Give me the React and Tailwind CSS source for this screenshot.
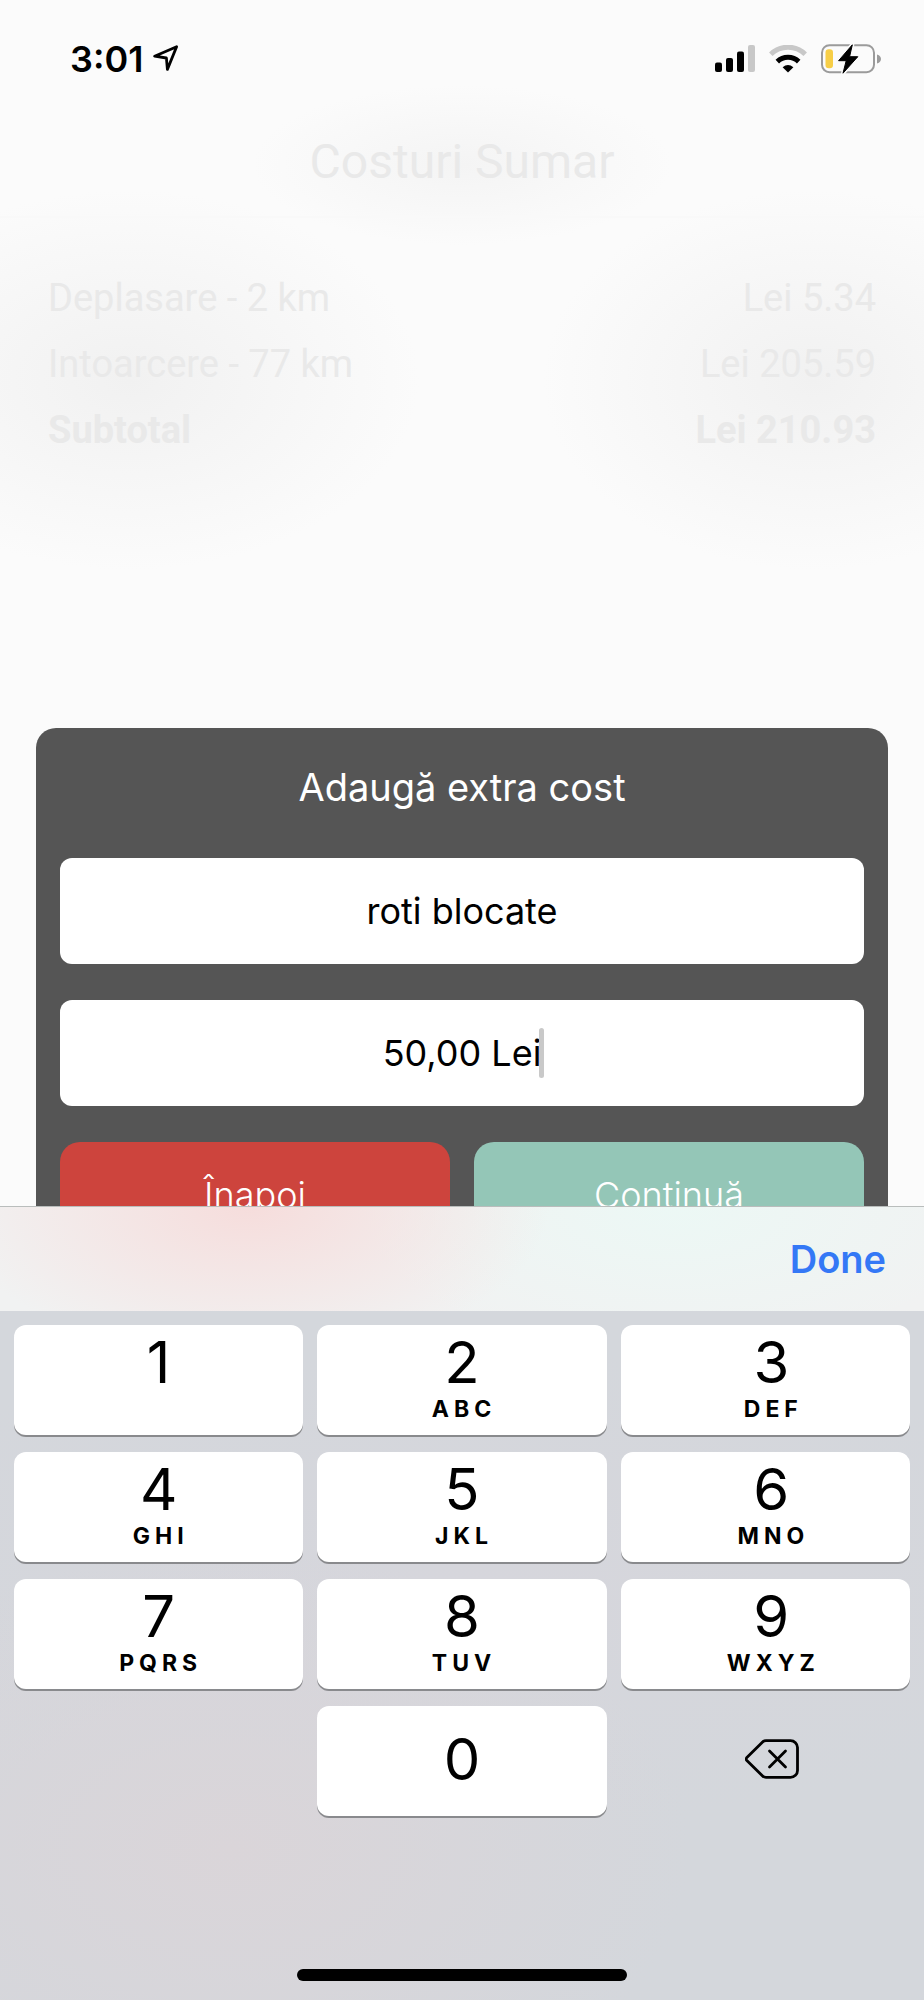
import { useState } from 'react'

const COSTS = [
  { label: 'Deplasare - 2 km', amount: 'Lei 5.34' },
  { label: 'Intoarcere - 77 km', amount: 'Lei 205.59' },
]

const KEYS = [
  { digit: '1', letters: '' },
  { digit: '2', letters: 'ABC' },
  { digit: '3', letters: 'DEF', last: true },
  { digit: '4', letters: 'GHI' },
  { digit: '5', letters: 'JKL' },
  { digit: '6', letters: 'MNO', last: true },
  { digit: '7', letters: 'PQRS' },
  { digit: '8', letters: 'TUV' },
  { digit: '9', letters: 'WXYZ', last: true },
]

function LocationIcon() {
  return (
    <svg width="26" height="28" viewBox="0 0 26 28" fill="none" stroke="#000" strokeWidth="2.8" strokeLinejoin="round">
      <path d="M1.6 11.2 23.6 1.8 14.4 24.4 13.4 13Z" />
    </svg>
  )
}

function SignalIcon() {
  return (
    <svg width="40" height="28" viewBox="0 0 40 28">
      <rect x="0" y="17.5" width="7" height="9.5" rx="2" />
      <rect x="11" y="13" width="7" height="14" rx="2" />
      <rect x="22" y="6.5" width="7" height="20.5" rx="2" />
      <rect x="33" y="0" width="7" height="27" rx="2" fill="#c8c8c8" />
    </svg>
  )
}

function WifiIcon() {
  return (
    <svg width="38" height="28" viewBox="0 0 38 28" fill="none" strokeWidth="5">
      <path d="M1.8 9.2a24.6 24.6 0 0 1 34.4 0" stroke="#c8c8c8" />
      <path d="M8.300 16.600a15.300 15.300 0 0 1 21.400 0" stroke="#000" />
      <path d="M13.600 22.200q5.400-4.400 10.800 0L19 27.600Z" fill="#000" />
    </svg>
  )
}

function BatteryIcon() {
  return (
    <svg width="60" height="30" viewBox="0 0 60 30">
      <rect x="1" y="1.2" width="52" height="27" rx="7.5" fill="none" stroke="#9b9b9b" strokeWidth="2" />
      <path d="M56 10.5c3 1 4 2.6 4 4.5s-1 3.5-4 4.5Z" fill="#9b9b9b" />
      <rect x="4.5" y="5.3" width="7.5" height="19" rx="3.2" fill="#f7ce46" />
      <path
        d="M31.3.8 17.6 16.7h7.6L22 29.2 36.8 12.7h-8.2Z"
        stroke="#fafafa"
        strokeWidth="4"
        strokeLinejoin="round"
      />
      <path d="M31.3.8 17.6 16.7h7.6L22 29.2 36.8 12.7h-8.2Z" stroke="#000" strokeLinejoin="round" />
    </svg>
  )
}

function DeleteIcon() {
  return (
    <svg width="54" height="40" viewBox="0 0 54 40" fill="none" stroke="#000" strokeWidth="2.8" strokeLinecap="round" strokeLinejoin="round">
      <path d="M21 1.6H45.5a7 7 0 0 1 7 7v22.8a7 7 0 0 1-7 7H21q-2 0-3.4-1.4L1.6 21.2q-1-1.2 0-2.4L17.6 3q1.4-1.4 3.4-1.4Z" />
      <path d="m24.5 12 16 16m0-16-16 16" />
    </svg>
  )
}

function StatusBar() {
  return (
    <div className="flex h-[118px] items-center justify-between pl-[70px] pr-[43px]">
      <div className="flex items-center gap-2.5">
        <span className="text-[36px] leading-10 font-semibold">3:01</span>
        <LocationIcon />
      </div>
      <div className="flex items-center gap-3.5">
        <SignalIcon />
        <WifiIcon />
        <BatteryIcon />
      </div>
    </div>
  )
}

function Keypad() {
  return (
    <div className="grid grid-cols-3 gap-x-3.5 gap-y-[17px] px-3.5 pt-3.5 text-black">
      {KEYS.map(({ digit, letters, last }) => (
        <button
          key={digit}
          className={`flex h-[110px] flex-col items-center rounded-xl bg-white pt-[7px] shadow-[0_2px_0_#898a8d] ${last ? 'pl-3' : ''}`}
        >
          <span className="text-[58px] leading-[60px]">{digit}</span>
          {letters && <span className="pl-1 text-[23px] leading-[34px] font-bold tracking-[5px]">{letters}</span>}
        </button>
      ))}
      <button className="col-start-2 flex h-[110px] items-center justify-center rounded-xl bg-white pb-1 shadow-[0_2px_0_#898a8d]">
        <span className="text-[58px] leading-[60px]">0</span>
      </button>
      <button aria-label="Delete" className="flex h-[110px] items-center justify-center pb-1 pl-3.5">
        <DeleteIcon />
      </button>
    </div>
  )
}

export default function App() {
  const [name, setName] = useState('roti blocate')
  const [price, setPrice] = useState('50,00 Lei')

  return (
    <div className="min-h-screen bg-[#fbfbfb] bg-[radial-gradient(210px_80px_at_50%_165px,#f4f4f4,transparent),radial-gradient(290px_190px_at_14%_380px,#f1f1f1,transparent),radial-gradient(270px_190px_at_88%_380px,#f1f1f1,transparent)] bg-no-repeat font-['Inter',sans-serif] text-black">
      <StatusBar />

      <main>
        <section className="font-['Roboto',sans-serif] text-[#e9e9e9]">
          <h1 className="border-b-2 border-[#f9f9f9] pt-3.5 pb-6 text-center text-[48px] leading-15">Costuri Sumar</h1>
          <dl className="px-12 pt-[47px] text-[38px] leading-[66px]">
            {COSTS.map((cost) => (
              <div key={cost.label} className="flex justify-between">
                <dt>{cost.label}</dt>
                <dd>{cost.amount}</dd>
              </div>
            ))}
            <div className="flex justify-between font-bold">
              <dt>Subtotal</dt>
              <dd>Lei 210.93</dd>
            </div>
          </dl>
        </section>

        <form
          className="mx-9 mt-[265px] flex flex-col gap-9 rounded-[20px] bg-[#555] p-6 text-[36px]"
          onSubmit={(e) => e.preventDefault()}
        >
          <h2 className="pt-3.5 pb-3.5 text-center text-[38px] leading-[42px] text-white">Adaugă extra cost</h2>
          <input
            aria-label="Nume cost"
            className="h-[106px] w-full rounded-xl bg-white text-center outline-none"
            value={name}
            onChange={(e) => setName(e.target.value)}
          />
          <div className="relative">
            <input
              aria-label="Valoare cost"
              className="block h-[106px] w-full rounded-xl bg-white text-center outline-none"
              value={price}
              onChange={(e) => setPrice(e.target.value)}
            />
            <span className="absolute top-7 left-1/2 ml-[77px] h-[50px] w-[5px] rounded-sm bg-[#c9c9c9]" />
          </div>
          <div className="grid grid-cols-2 gap-6 font-light text-white">
            <button type="button" className="h-[106px] rounded-[20px] bg-[#cd443d]">Înapoi</button>
            <button type="submit" className="h-[106px] rounded-[20px] bg-[#94c6b7]">Continuă</button>
          </div>
        </form>
      </main>

      {/* on-screen keyboard slides over the form */}
      <div className="fixed inset-x-0 bottom-0 bg-[#d4d7dc]">
        <div className="flex h-[105px] items-center justify-end border-t border-[#b9bdbc] bg-[#f1f2f2] bg-[radial-gradient(300px_150px_at_27%_0,#f6dddc,transparent),radial-gradient(320px_150px_at_73%_0,#ecf8f5,transparent)] pr-[38px]">
          <button className="text-[38px] font-semibold text-[#3478f6]">Done</button>
        </div>
        <div className="bg-[radial-gradient(460px_300px_at_25%_78%,#dad5d9,transparent),radial-gradient(700px_240px_at_50%_40%,#d6d6dc,transparent)]">
          <Keypad />
          <div className="flex h-[184px] items-end justify-center pb-[19px]">
            <div className="h-3 w-[330px] rounded-full bg-black" />
          </div>
        </div>
      </div>
    </div>
  )
}
